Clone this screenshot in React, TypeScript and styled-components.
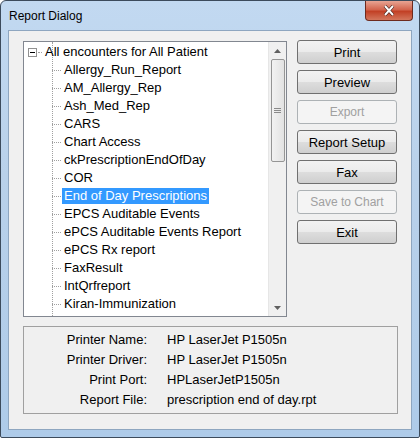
import React from 'react';
import styled, { createGlobalStyle } from 'styled-components';

const Global = createGlobalStyle`
  html, body { margin: 0; padding: 0; background: #fff; }
  body { font-family: 'Liberation Sans', Arial, sans-serif; font-size: 13px; color: #000; }
`;

const Frame = styled.div`
  width: 420px;
  height: 438px;
  box-sizing: border-box;
  border: 1px solid #3c4b5c;
  border-radius: 6px 6px 2px 2px;
  background: linear-gradient(180deg, #c2d9f1 0%, #b9d1ea 40%, #aecbe9 100%);
  display: flex;
  flex-direction: column;
  padding: 0 7px 7px;
`;

const TitleBar = styled.div`
  height: 29px;
  display: flex;
  align-items: center;
  justify-content: space-between;
  padding-left: 1px;
  font-size: 12px;
  font-family: 'Liberation Sans', Arial, sans-serif;
`;

const Close = styled.div`
  width: 46px;
  height: 19px;
  margin-top: -9px;
  margin-right: -1px;
  border: 1px solid #6d2a1e;
  border-top: none;
  border-radius: 0 0 4px 4px;
  background: linear-gradient(180deg, #e8a493 0%, #d3654e 45%, #c24126 55%, #d3765c 100%);
  display: flex;
  align-items: center;
  justify-content: center;
`;

const Client = styled.div`
  flex: 1;
  background: #f0f0f0;
  border: 1px solid #8ea6c0;
  padding: 10px 14px 0 14px;
  display: flex;
  flex-direction: column;
`;

const TopRow = styled.div`
  display: flex;
  gap: 10px;
`;

const TreeBox = styled.div`
  width: 265px;
  height: 276px;
  box-sizing: border-box;
  border: 1px solid #828790;
  background: #fff;
  display: flex;
  overflow: hidden;
`;

const TreeList = styled.div`
  flex: 1;
  position: relative;
  padding-top: 1px;
`;

const Row = styled.div<{ $indent: number }>`
  height: 18px;
  display: flex;
  align-items: center;
  padding-left: ${p => p.$indent}px;
  position: relative;
`;

const Label = styled.span<{ $sel?: boolean }>`
  padding: 0 2px;
  line-height: 16px;
  background: ${p => (p.$sel ? '#3399ff' : 'transparent')};
  color: ${p => (p.$sel ? '#fff' : '#000')};
  white-space: nowrap;
`;

const HDots = styled.span`
  width: 9px;
  border-top: 1px dotted #a0a0a0;
  margin-right: 1px;
`;

const VLine = styled.div`
  position: absolute;
  left: 28px;
  top: 0;
  bottom: 0;
  border-left: 1px dotted #a0a0a0;
`;

const Expander = styled.span`
  width: 7px;
  height: 7px;
  border: 1px solid #919191;
  background: #fff;
  position: relative;
  margin-right: 1px;
  &::after {
    content: '';
    position: absolute;
    left: 1px;
    top: 3px;
    width: 5px;
    border-top: 1px solid #000;
  }
`;

const ScrollBar = styled.div`
  width: 17px;
  background: #f0f0f0;
  border-left: 1px solid #e6e6e6;
  display: flex;
  flex-direction: column;
  align-items: center;
`;

const Arrow = styled.div`
  height: 17px;
  display: flex;
  align-items: center;
  justify-content: center;
`;

const Thumb = styled.div`
  width: 14px;
  height: 103px;
  box-sizing: border-box;
  border: 1px solid #959595;
  border-radius: 2px;
  background: linear-gradient(90deg, #f2f2f2, #e2e2e2);
  display: flex;
  align-items: center;
  justify-content: center;
`;

const Track = styled.div`
  flex: 1;
`;

const Buttons = styled.div`
  display: flex;
  flex-direction: column;
  gap: 6px;
  margin-top: -1px;
`;

const Btn = styled.button<{ $disabled?: boolean }>`
  width: 100px;
  height: 24px;
  font-family: 'Liberation Sans', Arial, sans-serif;
  font-weight: 400;
  font-size: ${p => (p.$disabled ? 12 : 13)}px;
  color: ${p => (p.$disabled ? '#a0a0a0' : '#000')};
  background: linear-gradient(180deg, #f2f2f2 0%, #ebebeb 50%, #dddddd 51%, #cfcfcf 100%);
  border: 1px solid #707070;
  border-radius: 3px;
  padding: 0;
  ${p => p.$disabled && 'background: #f4f4f4; border-color: #adb2b5;'}
`;

const InfoBox = styled.div`
  margin-top: 9px;
  width: 375px;
  height: 88px;
  box-sizing: border-box;
  border: 1px solid #a0a0a0;
  display: grid;
  grid-template-columns: 123px 1fr;
  column-gap: 20px;
  align-content: start;
  padding-top: 3px;
`;

const InfoLabel = styled.div`
  text-align: right;
  height: 20px;
  line-height: 20px;
`;

const InfoValue = styled.div`
  height: 20px;
  line-height: 20px;
`;

const items = [
  'Allergy_Run_Report', 'AM_Allergy_Rep', 'Ash_Med_Rep', 'CARS', 'Chart Access',
  'ckPrescriptionEndOfDay', 'COR', 'End of Day Prescriptions', 'EPCS Auditable Events',
  'ePCS Auditable Events Report', 'ePCS Rx report', 'FaxResult', 'IntQrfreport', 'Kiran-Immunization',
];

const buttons: [string, boolean][] = [
  ['Print', false], ['Preview', false], ['Export', true], ['Report Setup', false],
  ['Fax', false], ['Save to Chart', true], ['Exit', false],
];

const info = [
  ['Printer Name:', 'HP LaserJet P1505n'],
  ['Printer Driver:', 'HP LaserJet P1505n'],
  ['Print Port:', 'HPLaserJetP1505n'],
  ['Report File:', 'prescription end of day.rpt'],
];

export default function App() {
  return (
    <>
      <Global />
      <Frame>
        <TitleBar>
          <span>Report Dialog</span>
          <Close>
            <svg width="12" height="11" viewBox="0 0 12 11">
              <path d="M2 1 L10 10 M10 1 L2 10" stroke="#3a1a14" strokeWidth="3.2" />
              <path d="M2 1 L10 10 M10 1 L2 10" stroke="#fff" strokeWidth="2" />
            </svg>
          </Close>
        </TitleBar>
        <Client>
          <TopRow>
            <TreeBox>
              <TreeList>
                <VLine />
                <Row $indent={4}>
                  <Expander />
                  <HDots style={{ width: 4 }} />
                  <Label>All encounters for All Patient</Label>
                </Row>
                {items.map(it => (
                  <Row key={it} $indent={28}>
                    <HDots />
                    <Label $sel={it === 'End of Day Prescriptions'}>{it}</Label>
                  </Row>
                ))}
              </TreeList>
              <ScrollBar>
                <Arrow>
                  <svg width="7" height="4"><path d="M0 4 L3.5 0 L7 4Z" fill="#606060" /></svg>
                </Arrow>
                <Thumb>
                  <svg width="7" height="6"><path d="M0 .5H7M0 2.5H7M0 4.5H7" stroke="#8a8a8a" /></svg>
                </Thumb>
                <Track />
                <Arrow>
                  <svg width="7" height="4"><path d="M0 0 L3.5 4 L7 0Z" fill="#606060" /></svg>
                </Arrow>
              </ScrollBar>
            </TreeBox>
            <Buttons>
              {buttons.map(([b, d]) => (
                <Btn key={b} $disabled={d}>{b}</Btn>
              ))}
            </Buttons>
          </TopRow>
          <InfoBox>
            {info.map(([l, v]) => (
              <React.Fragment key={l}>
                <InfoLabel>{l}</InfoLabel>
                <InfoValue>{v}</InfoValue>
              </React.Fragment>
            ))}
          </InfoBox>
        </Client>
      </Frame>
    </>
  );
}
